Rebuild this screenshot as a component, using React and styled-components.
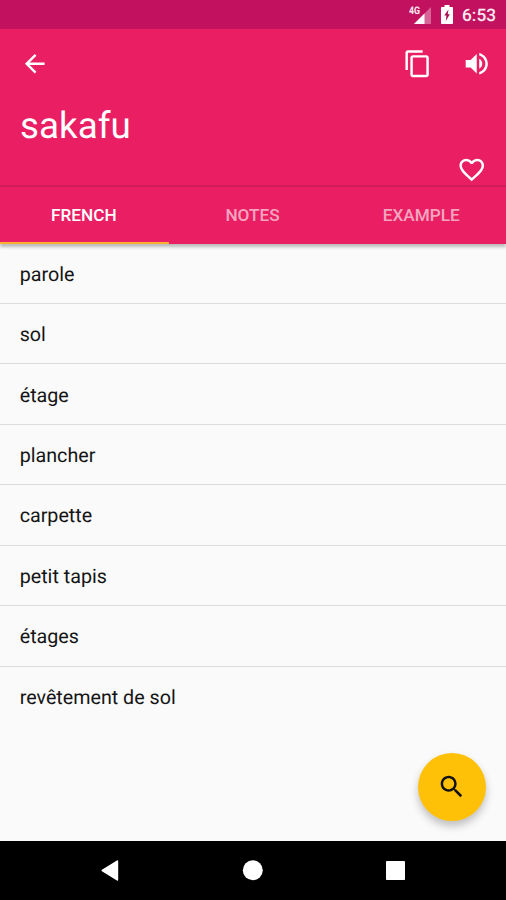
import React, { useState } from 'react';
import styled, { createGlobalStyle } from 'styled-components';

const GlobalStyle = createGlobalStyle`
    * {
        box-sizing: border-box;
    }

    body {
        margin: 0;
        font-family: Roboto, sans-serif;
        text-rendering: geometricPrecision;
        background-color: #fafafa;
    }
`

const Screen = styled.div`
    display: flex;
    flex-direction: column;
    position: relative;
    width: 506px;
    height: 900px;
    overflow: hidden;
    background-color: #fafafa;
`

const StatusBar = styled.div`
    display: flex;
    flex: none;
    justify-content: flex-end;
    align-items: center;
    height: 29px;
    padding-right: 10px;
    background-color: #c2125f;
    color: #fceaf2;
`

const Clock = styled.span`
    width: 34px;
    margin-left: 9px;
    padding-top: 3px;
    font-size: 17.3px;
    font-weight: 500;
    line-height: 20px;
    white-space: nowrap;
`

const Network = styled.div`
    display: flex;
    align-items: flex-start;
    height: 18px;
    margin-right: 10px;
`

const NetworkLabel = styled.span`
    width: 5px;
    font-size: 10.5px;
    font-weight: 700;
    line-height: 9px;
    transform: scaleX(0.84);
    transform-origin: left;
`

const Header = styled.header`
    display: flex;
    flex: none;
    flex-direction: column;
    height: 155.5px;
    background-color: #e91e63;
    color: #fff;
`

const Toolbar = styled.div`
    display: flex;
    align-items: center;
    height: 70px;
    padding: 0 15px 0 20px;
`

const Spacer = styled.div`
    flex: 1;
`

const IconButton = styled.button`
    display: flex;
    width: 29.5px;
    height: 29.5px;
    margin-left: ${props => props.$gap || 0}px;
    padding: 0;
    border: none;
    background: none;
    color: inherit;
    cursor: pointer;
`

const Icon = styled.svg`
    display: block;
    width: 29.5px;
    height: 29.5px;
    fill: currentColor;
`

const Word = styled.h1`
    margin: 5px 0 0 20px;
    font-size: 36.8px;
    font-weight: 400;
    line-height: 44px;
`

const Actions = styled.div`
    display: flex;
    justify-content: flex-end;
    margin-top: 6.5px;
    padding-right: 20px;
`

const TabBar = styled.nav`
    display: flex;
    flex: none;
    z-index: 1;
    height: 59px;
    border-top: 2px solid #cf1b59;
    background-color: #e91e63;
    box-shadow: 0 3px 3px rgba(0, 0, 0, 0.25);
`

const Tab = styled.button`
    flex: 1;
    padding: 1px 1px 0 0;
    border: none;
    border-bottom: 2px solid ${props => props.$active ? '#fbb034' : 'transparent'};
    background: none;
    color: ${props => props.$active ? '#fff' : 'rgba(255, 255, 255, 0.62)'};
    font-family: inherit;
    font-size: 17.2px;
    font-weight: 500;
    text-transform: uppercase;
    cursor: pointer;
`

const List = styled.ul`
    flex: 1;
    margin: 0;
    padding: 0;
    list-style: none;
`

const Row = styled.li`
    display: flex;
    align-items: center;
    height: 60.45px;
    padding: 2px 0 0 19.7px;
    border-bottom: 1.5px solid #dcdcdc;
    color: #151515;
    font-size: 19.7px;

    &:last-child {
        border-bottom-color: transparent;
    }
`

const SearchButton = styled.button`
    display: flex;
    position: absolute;
    right: 20px;
    bottom: 79px;
    justify-content: center;
    align-items: center;
    width: 68.5px;
    height: 68.5px;
    padding: 0;
    border: none;
    border-radius: 50%;
    background-color: #ffc107;
    color: #111;
    box-shadow: 0 5px 9px rgba(0, 0, 0, 0.24);
    cursor: pointer;
`

const NavigationBar = styled.div`
    display: flex;
    flex: none;
    justify-content: center;
    gap: 113px;
    height: 59px;
    padding-top: 14px;
    background-color: #000;
`

const tabs = ['French', 'Notes', 'Example'];

const translations = [
    'parole',
    'sol',
    'étage',
    'plancher',
    'carpette',
    'petit tapis',
    'étages',
    'revêtement de sol',
];

const paths = {
    back: 'M20 11H7.83l5.59-5.59L12 4l-8 8 8 8 1.41-1.41L7.83 13H20v-2z',
    copy: 'M16 1H4c-1.1 0-2 .9-2 2v14h2V3h12V1zm3 4H8c-1.1 0-2 .9-2 2v14c0 1.1.9 2 2 2h11c1.1 0 2-.9 2-2V7c0-1.1-.9-2-2-2zm0 16H8V7h11v14z',
    volume: 'M3 9v6h4l5 5V4L7 9H3zm13.5 3c0-1.77-1.02-3.29-2.5-4.03v8.05c1.48-.73 2.5-2.25 2.5-4.02zM14 3.23v2.06c2.89.86 5 3.54 5 6.71s-2.11 5.85-5 6.71v2.06c4.01-.91 7-4.49 7-8.77s-2.99-7.86-7-8.77z',
    heart: 'M16.5 3c-1.74 0-3.41.81-4.5 2.09C10.91 3.81 9.24 3 7.5 3 4.42 3 2 5.42 2 8.5c0 3.78 3.4 6.86 8.55 11.54L12 21.35l1.45-1.32C18.6 15.36 22 12.28 22 8.5 22 5.42 19.58 3 16.5 3zm-4.4 15.55l-.1.1-.1-.1C7.14 14.24 4 11.39 4 8.5 4 6.5 5.5 5 7.5 5c1.54 0 3.04.99 3.57 2.36h1.87C13.46 5.99 14.96 5 16.5 5c2 0 3.5 1.5 3.5 3.5 0 2.89-3.14 5.74-7.9 10.05z',
    search: 'M15.5 14h-.79l-.28-.27C15.41 12.59 16 11.11 16 9.5 16 5.91 13.09 3 9.5 3S3 5.91 3 9.5 5.91 16 9.5 16c1.61 0 3.09-.59 4.23-1.57l.27.28v.79l5 4.99L20.49 19l-4.99-5zm-6 0C7.01 14 5 11.99 5 9.5S7.01 5 9.5 5 14 7.01 14 9.5 11.99 14 9.5 14z',
};

const MaterialIcon = ({ name }) => (
    <Icon viewBox="0 0 24 24"><path d={paths[name]} /></Icon>
);

const StatusIcons = () => (
    <>
        <Network>
            <NetworkLabel>4G</NetworkLabel>
            <svg width="17" height="18" viewBox="0 0 17 18">
                <path d="M17 1v17H0z" fill="#fff" opacity="0.35" />
                <path d="M10.5 7.5V18H0z" fill="#fff" />
            </svg>
        </Network>
        <svg width="12" height="19" viewBox="0 0 12 19">
            <path d="M3.5 0h5v2H11c.6 0 1 .4 1 1v15c0 .6-.4 1-1 1H1c-.6 0-1-.4-1-1V3c0-.6.4-1 1-1h2.5z" fill="#fff" />
            <path d="M7.5 4.5L3.2 10.6h2.2l-.6 5.4 4-6.7H6.7z" fill="#a80f52" />
        </svg>
    </>
);

export default function App() {
    const [activeTab, setActiveTab] = useState('French');

    return (
        <Screen>
            <GlobalStyle />
            <StatusBar>
                <StatusIcons />
                <Clock>6:53</Clock>
            </StatusBar>
            <Header>
                <Toolbar>
                    <IconButton aria-label="Back"><MaterialIcon name="back" /></IconButton>
                    <Spacer />
                    <IconButton aria-label="Copy"><MaterialIcon name="copy" /></IconButton>
                    <IconButton aria-label="Listen" $gap={29.5}><MaterialIcon name="volume" /></IconButton>
                </Toolbar>
                <Word>sakafu</Word>
                <Actions>
                    <IconButton aria-label="Favorite"><MaterialIcon name="heart" /></IconButton>
                </Actions>
            </Header>
            <TabBar>
                {tabs.map(tab => (
                    <Tab key={tab} $active={tab === activeTab} onClick={() => setActiveTab(tab)}>{tab}</Tab>
                ))}
            </TabBar>
            <List>
                {activeTab === 'French' && translations.map(text => <Row key={text}>{text}</Row>)}
            </List>
            <SearchButton aria-label="Search"><MaterialIcon name="search" /></SearchButton>
            <NavigationBar>
                <svg width="30" height="30" viewBox="0 0 30 30">
                    <path d="M6.9 14.7L21.9 5.5q1.3-.5 1.300.7v18.600q0 1.200-1.300.7L6.900 16.300q-1-.8 0-1.600z" fill="#fff" />
                </svg>
                <svg width="30" height="30" viewBox="0 0 30 30">
                    <circle cx="14.8" cy="15.3" r="10" fill="#fff" />
                </svg>
                <svg width="30" height="30" viewBox="0 0 30 30">
                    <rect x="5" y="6" width="19" height="19" rx="0.8" fill="#fff" />
                </svg>
            </NavigationBar>
        </Screen>
    );
}
